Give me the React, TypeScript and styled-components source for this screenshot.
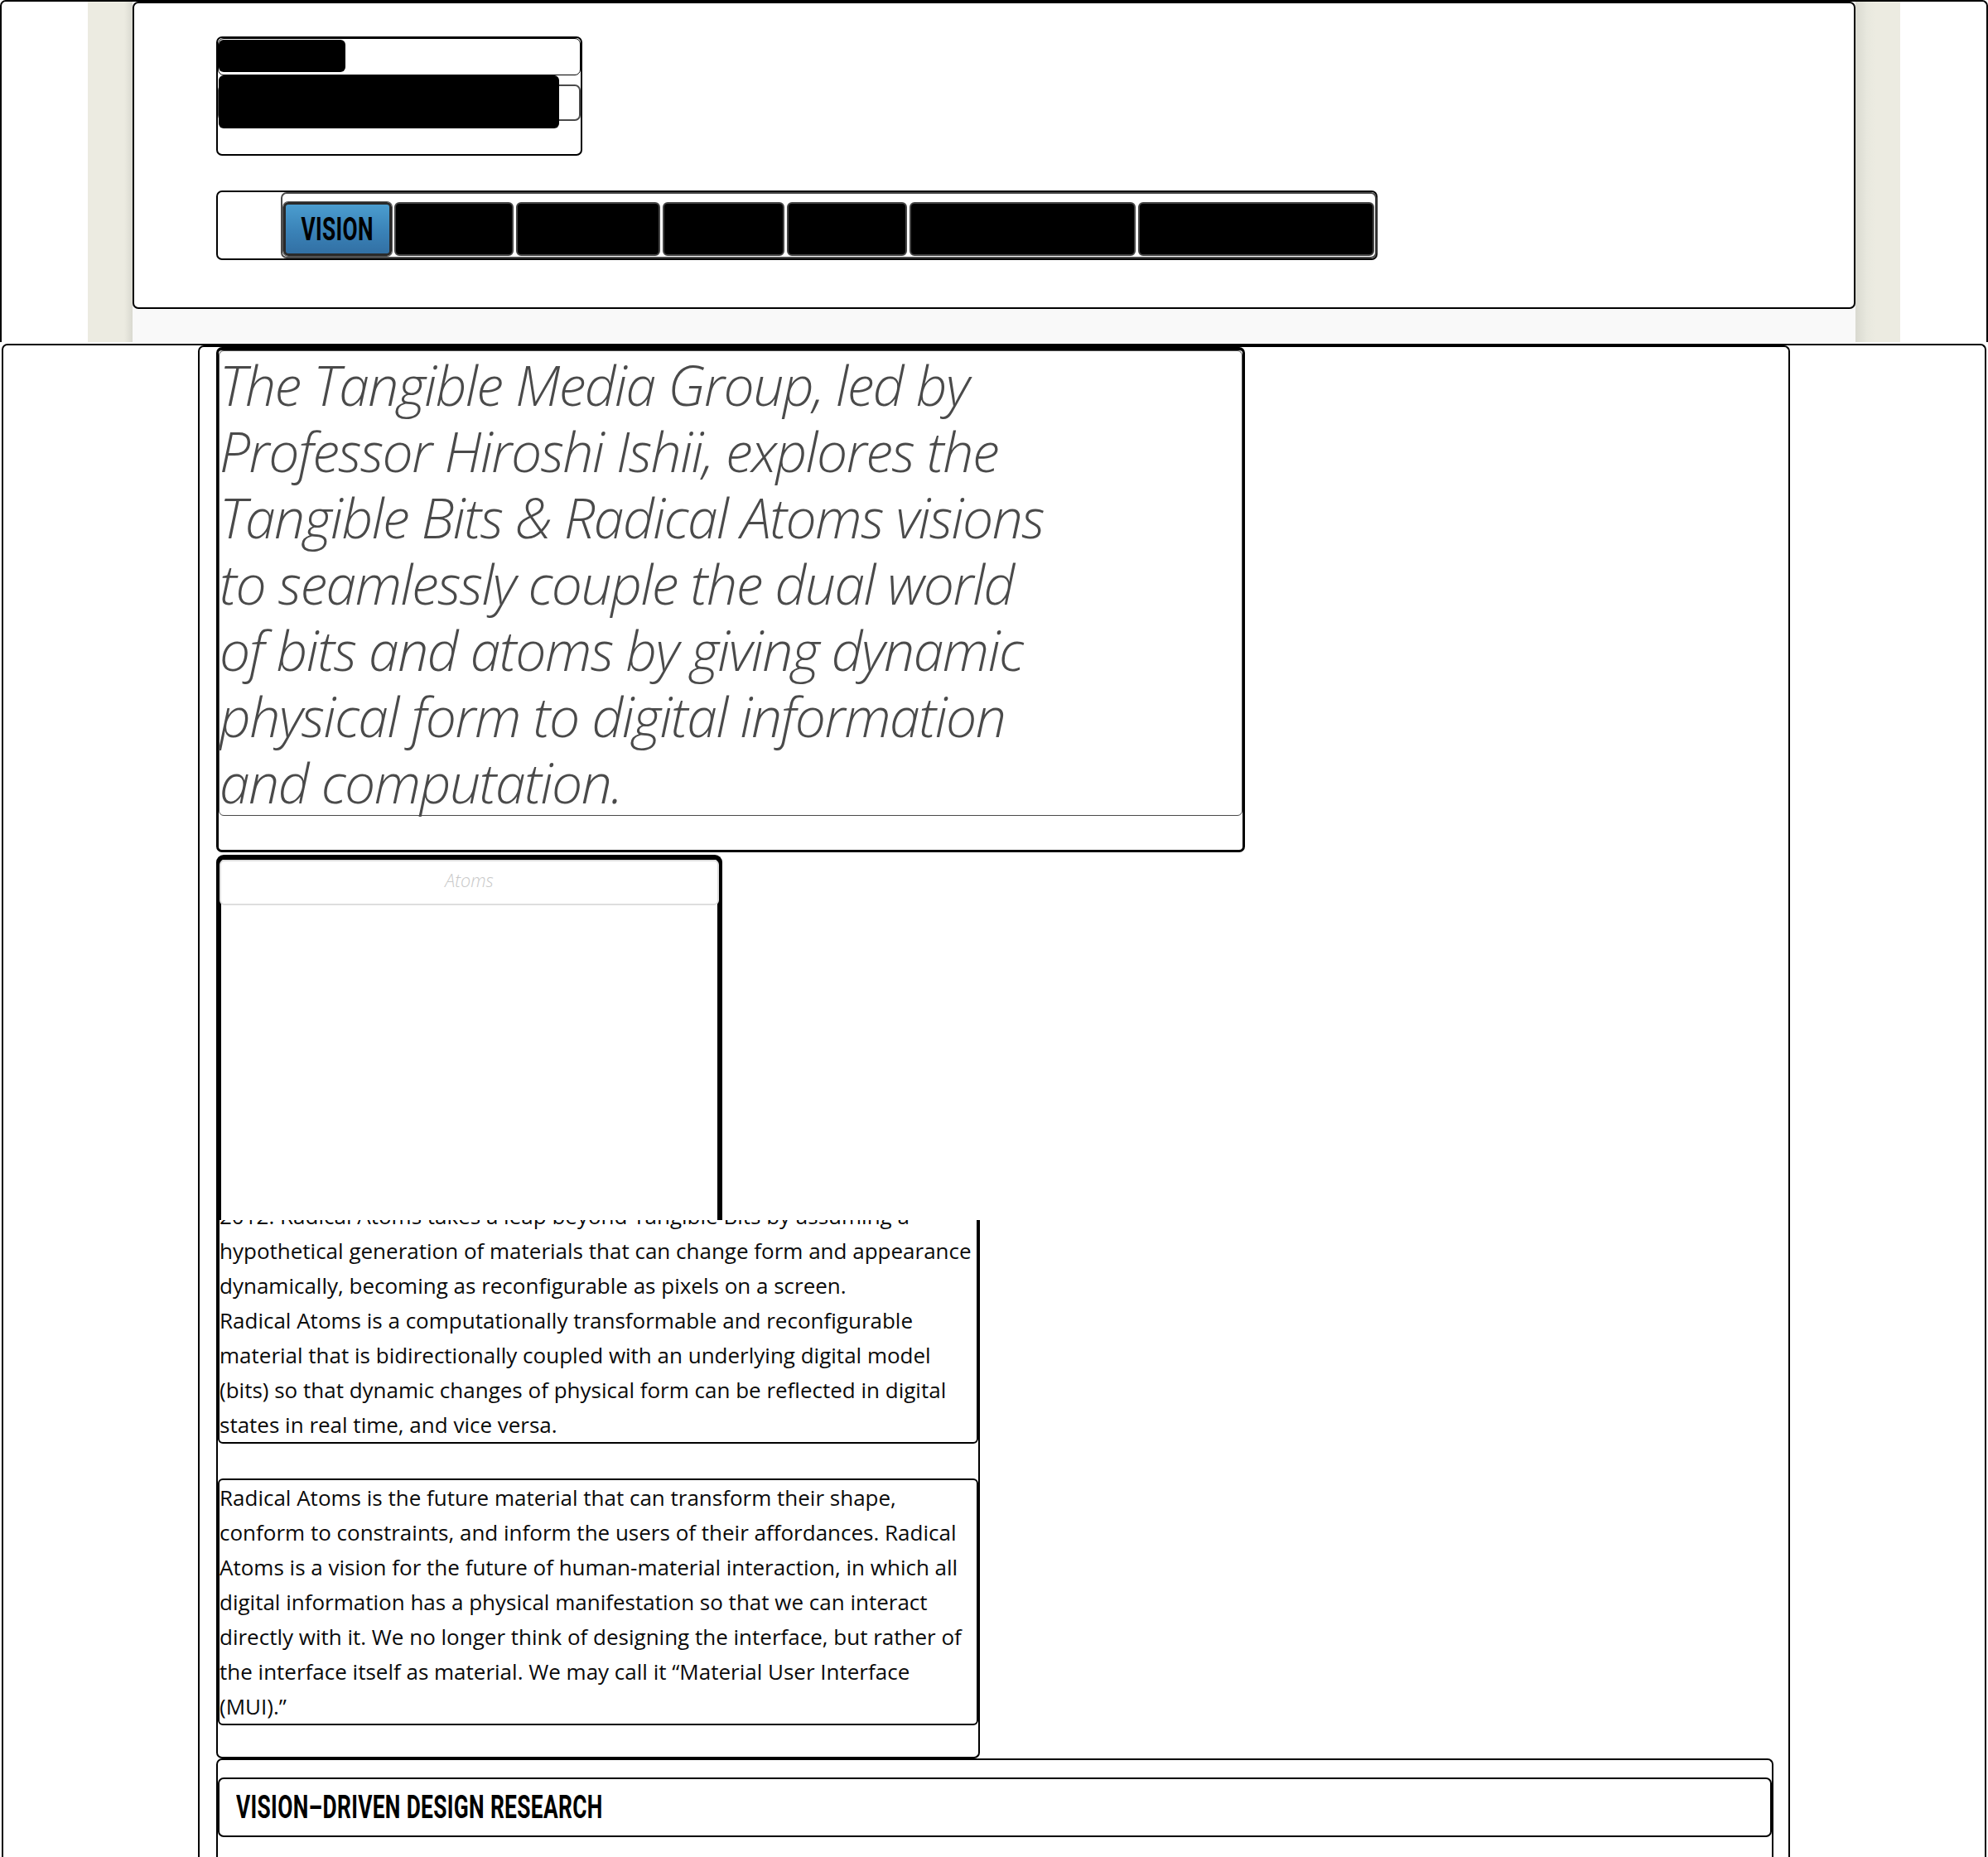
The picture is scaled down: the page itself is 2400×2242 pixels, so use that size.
import React from "react";
import styled, { createGlobalStyle } from "styled-components";

const Global = createGlobalStyle`
  html, body { margin: 0; padding: 0; background: #fff; }
  body { font-family: "Open Sans", "Liberation Sans", sans-serif; color: #111; }
  * { box-sizing: border-box; }
`;

const HeaderFrame = styled.header`
  height: 413px;
  border: 2px solid #000;
  border-bottom: 0;
  border-radius: 7px 7px 0 0;
`;

const Wrapper = styled.div`
  height: 100%;
  margin: 0 104px;
  padding: 0 54px;
  background: linear-gradient(
    to right,
    #ecebe1 0,
    #ecebe1 44px,
    #d9d9d0 54px,
    #d9d9d0 calc(100% - 54px),
    #e8e8de calc(100% - 40px),
    #ecebe1 calc(100% - 30px),
    #ecebe1 100%
  );
`;

const PageColumn = styled.div`
  height: 100%;
  background: #f9f9f9;
`;

const Panel = styled.div`
  height: 371px;
  background: #fff;
  border: 2px solid #000;
  border-radius: 7px;
  padding: 40px 0 0 99px;
`;

const LogoBox = styled.div`
  width: 442px;
  height: 144px;
  border: 2px solid #000;
  border-radius: 7px;
`;

const LogoTop = styled.div`
  height: 45px;
  border: 1.5px solid #000;
  border-radius: 7px;
  padding: 1px 0 0 0;
`;

const Redacted = styled.div<{ $w: number; $h: number }>`
  width: ${(p) => p.$w}px;
  height: ${(p) => p.$h}px;
  background: #000;
  border-radius: 6px;
`;

const LogoBottom = styled.div`
  position: relative;
  margin-top: 11px;
  height: 44px;
  border: 2px solid #4a4a4a;
  border-radius: 7px;
`;

const LogoMark = styled(Redacted)`
  position: absolute;
  top: -13px;
  left: -1px;
`;

const NavBox = styled.nav`
  display: flex;
  width: 1402px;
  height: 84px;
  margin-top: 42px;
  padding-left: 76px;
  border: 2px solid #000;
  border-radius: 7px;
`;

const NavBar = styled.div`
  flex: 1;
  display: flex;
  align-items: flex-end;
  gap: 3px;
  padding: 0 1px 1px 1px;
  border: 2px solid #4a4a4a;
  border-radius: 7px;
`;

const NavButton = styled.div<{ $w: number; $active?: boolean }>`
  width: ${(p) => p.$w}px;
  height: 65px;
  display: flex;
  align-items: center;
  justify-content: center;
  border-radius: 6px;
  border: ${(p) => (p.$active ? "3px solid #2a2a2a" : "2px solid #454545")};
  background: ${(p) =>
    p.$active ? "linear-gradient(to bottom, #4b9dcf 0%, #3a82b7 55%, #3270a4 100%)" : "#000"};
  box-shadow: ${(p) => (p.$active ? "0 0 0 1px #555" : "none")};
`;

const Gothic = styled.span`
  display: inline-block;
  font-family: Roboto, "Liberation Sans", sans-serif;
  font-weight: 700;
  font-size: 38px;
  line-height: 1;
  color: #000;
  letter-spacing: 0.5px;
  transform: scaleX(0.69);
`;

const NavLabel = styled(Gothic)`
  transform-origin: center;
`;

const HeadingLabel = styled(Gothic)`
  font-size: 39px;
  transform: scaleX(0.675);
  transform-origin: left center;
  white-space: nowrap;
`;

const MainFrame = styled.main`
  margin: 2px 2px 0;
  border: 2px solid #000;
  border-bottom: 0;
  border-radius: 7px 7px 0 0;
`;

const ContentColumn = styled.div`
  width: 1922px;
  margin: 0 auto;
  padding: 0 18px 0 20px;
  border: 2px solid #000;
  border-bottom: 0;
  border-radius: 7px 7px 0 0;
`;

const QuoteBox = styled.section`
  width: 1242px;
  border: 3px solid #000;
  border-top-width: 4px;
  border-radius: 7px;
  padding-bottom: 41px;
`;

const QuoteInner = styled.div`
  border: 1.5px solid #4a4a4a;
  border-radius: 6px;
`;

const QuoteText = styled.p`
  margin: 0;
  max-width: 1020px;
  font-family: "Open Sans", "Liberation Sans", sans-serif;
  font-style: italic;
  font-weight: 300;
  font-size: 66px;
  letter-spacing: -1.5px;
  line-height: 80px;
  color: #4a4a4a;
`;

const Slider = styled.div`
  width: 611px;
  height: 441px;
  margin-top: 3px;
  border: 6px solid #000;
  border-bottom: 0;
  border-radius: 9px 9px 0 0;
  background: #fff;
`;

const Caption = styled.div`
  height: 55px;
  margin: 0 -2px;
  padding-bottom: 6px;
  display: flex;
  align-items: center;
  justify-content: center;
  border: 2px solid #dedede;
  border-radius: 6px;
  font-family: "Open Sans", "Liberation Sans", sans-serif;
  font-style: italic;
  font-weight: 300;
  font-size: 21.5px;
  color: #c9c9c9;
`;

const ArticleBody = styled.div`
  width: 922px;
  overflow: hidden;
  padding-bottom: 38px;
  border: 2px solid #000;
  border-top: 0;
  border-radius: 0 0 7px 7px;
`;

const TextBox = styled.p<{ $first?: boolean }>`
  margin: ${(p) => (p.$first ? "-28px" : "42px")} 0 0 0;
  border: 2px solid #000;
  border-radius: 6px;
  white-space: nowrap;
  font-family: "Open Sans", "Liberation Sans", sans-serif;
  font-size: 26px;
  letter-spacing: 0;
  line-height: 42px;
  color: #0a0a0a;
`;

const SectionBox = styled.section`
  min-height: 240px;
  padding-top: 21px;
  border: 2px solid #000;
  border-bottom: 0;
  border-radius: 7px 7px 0 0;
`;

const HeadingBox = styled.h2`
  margin: 0;
  height: 72px;
  display: flex;
  align-items: center;
  padding-left: 20px;
  border: 2px solid #000;
  border-radius: 7px;
`;

const navItems = [
  { w: 131, label: "VISION", active: true },
  { w: 144 },
  { w: 174 },
  { w: 147 },
  { w: 145 },
  { w: 273 },
  { w: 285 },
];

const para1 = [
  "2012: Radical Atoms takes a leap beyond Tangible Bits by assuming a",
  "hypothetical generation of materials that can change form and appearance",
  "dynamically, becoming as reconfigurable as pixels on a screen.",
  "Radical Atoms is a computationally transformable and reconfigurable",
  "material that is bidirectionally coupled with an underlying digital model",
  "(bits) so that dynamic changes of physical form can be reflected in digital",
  "states in real time, and vice versa.",
];

const para2 = [
  "Radical Atoms is the future material that can transform their shape,",
  "conform to constraints, and inform the users of their affordances. Radical",
  "Atoms is a vision for the future of human-material interaction, in which all",
  "digital information has a physical manifestation so that we can interact",
  "directly with it. We no longer think of designing the interface, but rather of",
  "the interface itself as material. We may call it “Material User Interface",
  "(MUI).”",
];

function Lines({ lines }: { lines: string[] }) {
  return (
    <>
      {lines.map((l, i) => (
        <React.Fragment key={i}>
          {i > 0 && <br />}
          {l}
        </React.Fragment>
      ))}
    </>
  );
}

export default function App() {
  return (
    <>
      <Global />
      <HeaderFrame>
        <Wrapper>
          <PageColumn>
            <Panel>
              <LogoBox>
                <LogoTop>
                  <Redacted $w={153} $h={39} />
                </LogoTop>
                <LogoBottom>
                  <LogoMark $w={411} $h={64} />
                </LogoBottom>
              </LogoBox>
              <NavBox>
                <NavBar>
                  {navItems.map((n, i) => (
                    <NavButton key={i} $w={n.w} $active={n.active}>
                      {n.label && <NavLabel>{n.label}</NavLabel>}
                    </NavButton>
                  ))}
                </NavBar>
              </NavBox>
            </Panel>
          </PageColumn>
        </Wrapper>
      </HeaderFrame>
      <MainFrame>
        <ContentColumn>
          <QuoteBox>
            <QuoteInner>
              <QuoteText>
                The Tangible Media Group, led by Professor Hiroshi Ishii, explores the Tangible Bits
                &amp; Radical Atoms visions to seamlessly couple the dual world of bits and atoms by
                giving dynamic physical form to digital information and computation.
              </QuoteText>
            </QuoteInner>
          </QuoteBox>
          <Slider>
            <Caption>Atoms</Caption>
          </Slider>
          <ArticleBody>
            <TextBox $first>
              <Lines lines={para1} />
            </TextBox>
            <TextBox>
              <Lines lines={para2} />
            </TextBox>
          </ArticleBody>
          <SectionBox>
            <HeadingBox>
              <HeadingLabel>VISION–DRIVEN DESIGN RESEARCH</HeadingLabel>
            </HeadingBox>
          </SectionBox>
        </ContentColumn>
      </MainFrame>
    </>
  );
}
